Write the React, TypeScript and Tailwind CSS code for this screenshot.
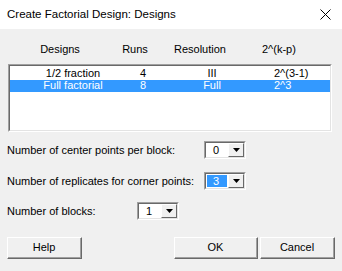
import React from "react";

const font = { fontFamily: '"Liberation Sans", Arial, sans-serif' };

type ComboProps = { value: string; selected?: boolean };

// classic win32 combo box: sunken field + little raised arrow button
const Combo = ({ value, selected }: ComboProps) => (
  <div className="flex h-[18px] w-[42px] shrink-0 border border-t-[#a0a0a0] border-l-[#a0a0a0] border-b-white border-r-white">
    <div className="flex flex-1 border border-t-[#696969] border-l-[#696969] border-b-[#e3e3e3] border-r-[#e3e3e3] bg-white">
      <div className="flex flex-1 p-[1px]">
        <div
          className={
            "flex flex-1 items-center pl-[6px] text-[11px] leading-none " +
            (selected ? "bg-[#3399ff] text-white" : "text-black")
          }
        >
          {value}
        </div>
      </div>
      <div className="flex w-[16px] items-center justify-center border border-t-white border-l-white border-b-[#696969] border-r-[#696969] bg-[#f0f0f0]">
        <svg width="7" height="4" viewBox="0 0 7 4">
          <path d="M0 0h7L3.5 4z" fill="#000" />
        </svg>
      </div>
    </div>
  </div>
);

type ButtonProps = { label: string; width: string };

const Button = ({ label, width }: ButtonProps) => (
  <div className={"flex h-[22px] border border-t-white border-l-white border-b-[#696969] border-r-[#696969] " + width}>
    <div className="flex flex-1 items-center justify-center border-b border-r border-b-[#a0a0a0] border-r-[#a0a0a0] bg-[#f0f0f0] text-[11px] text-black">
      {label}
    </div>
  </div>
);

const rows = [
  { design: "1/2 fraction", runs: "4", res: "III", kp: "2^(3-1)", selected: false },
  { design: "Full factorial", runs: "8", res: "Full", kp: "2^3", selected: true },
];

export default function App() {
  return (
    <div className="flex h-[271px] w-[342px] flex-col bg-[#f0f0f0] text-black" style={font}>
      {/* title bar */}
      <div className="flex h-[29px] items-center justify-between bg-white pl-[7px] pr-[11px]">
        <span className="text-[11.5px]">Create Factorial Design: Designs</span>
        <svg width="11" height="11" viewBox="0 0 11 11">
          <path d="M0.5 0.5l10 10M10.5 0.5l-10 10" stroke="#000" strokeWidth="1" />
        </svg>
      </div>

      {/* column headers */}
      <div className="mt-[13px] flex h-[14px] items-center text-[11px]">
        <span className="w-[120px] text-center">Designs</span>
        <span className="w-[30px] text-center">Runs</span>
        <span className="w-[100px] text-center">Resolution</span>
        <span className="pl-[12px]">2^(k-p)</span>
      </div>

      {/* list box */}
      <div className="mx-[8px] mt-[8px] flex h-[68px] w-[324px] border border-t-[#a0a0a0] border-l-[#a0a0a0] border-b-white border-r-white">
        <div className="flex-1 border border-t-[#696969] border-l-[#696969] border-b-[#e3e3e3] border-r-[#e3e3e3] bg-white pt-[1px]">
          {rows.map((r) => (
            <div
              key={r.design}
              className={
                "flex h-[12.5px] items-center text-[11px] leading-none " +
                (r.selected ? "bg-[#3399ff] text-white" : "text-black")
              }
            >
              <span className="w-[126px] text-center">{r.design}</span>
              <span className="w-[14px] text-center">{r.runs}</span>
              <span className="w-[124px] text-center">{r.res}</span>
              <span>{r.kp}</span>
            </div>
          ))}
        </div>
      </div>

      {/* options */}
      <div className="mt-[9px] grid grid-cols-[197px_42px] items-center gap-y-[13px] pl-[7px] text-[11px]">
        <span className="whitespace-nowrap">Number of center points per block:</span>
        <Combo value="0" />
        <span className="whitespace-nowrap">Number of replicates for corner points:</span>
        <Combo value="3" selected />
      </div>
      <div className="mt-[12px] flex items-center pl-[7px] text-[11px]">
        <span className="w-[130px] shrink-0 whitespace-nowrap">Number of blocks:</span>
        <Combo value="1" />
      </div>

      {/* buttons */}
      <div className="mt-[17px] flex px-[7px]">
        <Button label="Help" width="w-[75px]" />
        <div className="flex-1" />
        <Button label="OK" width="w-[84px]" />
        <div className="w-[2px]" />
        <Button label="Cancel" width="w-[75px]" />
      </div>
    </div>
  );
}
